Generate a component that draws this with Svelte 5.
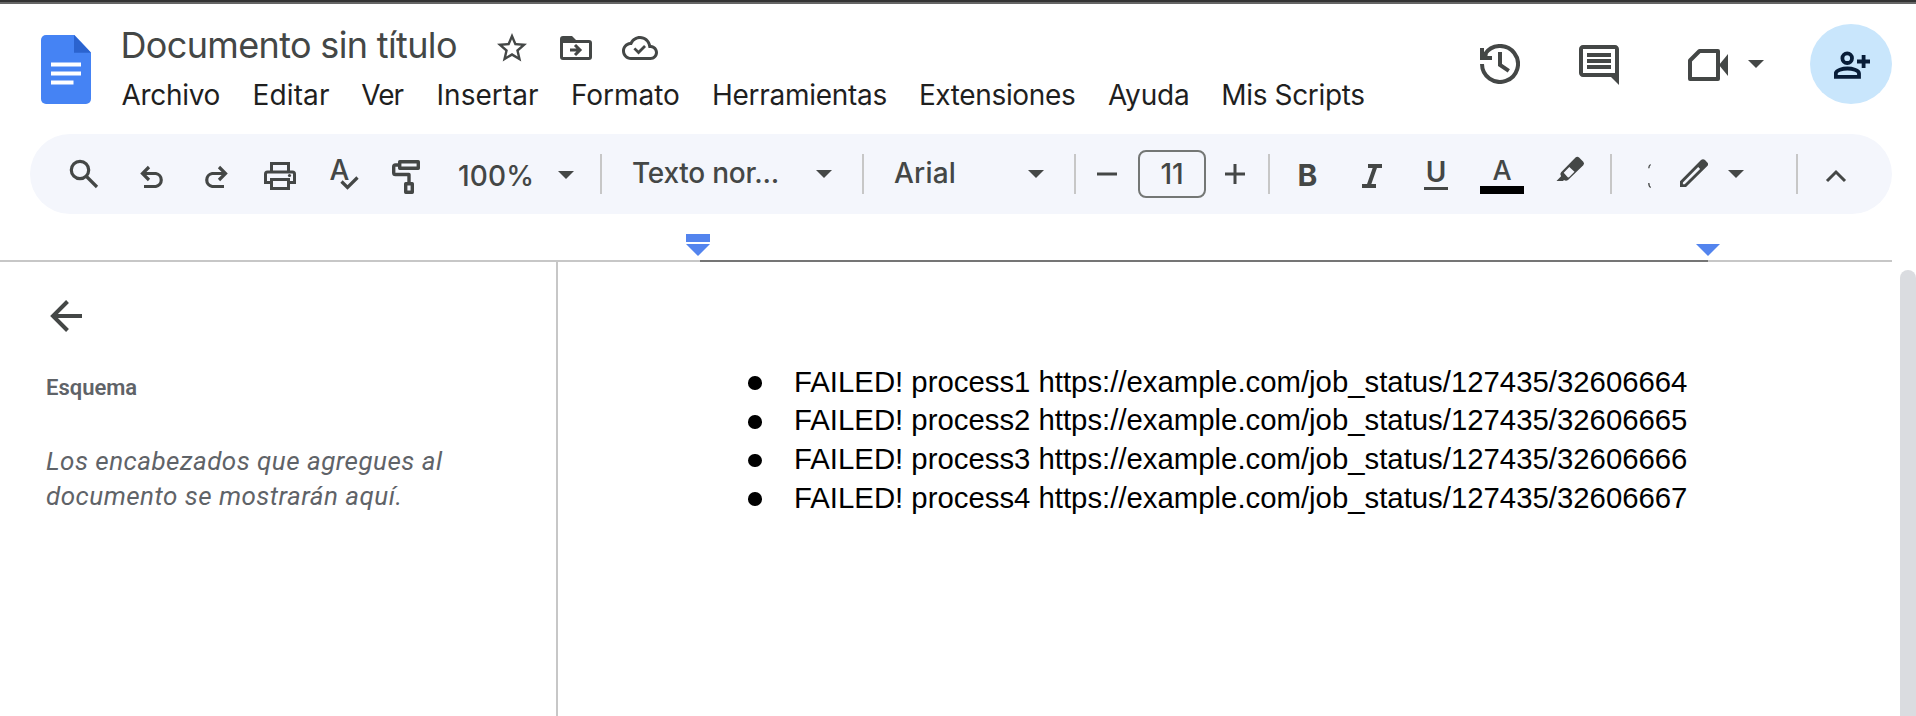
<script>
  const menus = [
    { label: 'Archivo', width: 131, spacing: -0.32 },
    { label: 'Editar', width: 108.8, spacing: 0.14 },
    { label: 'Ver', width: 75.2, spacing: -1 },
    { label: 'Insertar', width: 134.500, spacing: 0.04 },
    { label: 'Formato', width: 141, spacing: -0.05 },
    { label: 'Herramientas', width: 206.9, spacing: -0.28 },
    { label: 'Extensiones', width: 189, spacing: -0.36 },
    { label: 'Ayuda', width: 113.400, spacing: -0.2 },
    { label: 'Mis Scripts', width: 150, spacing: -0.35 }
  ];

  const items = [
    'FAILED! process1 https://example.com/job_status/127435/32606664',
    'FAILED! process2 https://example.com/job_status/127435/32606665',
    'FAILED! process3 https://example.com/job_status/127435/32606666',
    'FAILED! process4 https://example.com/job_status/127435/32606667'
  ];
</script>

{#snippet caret()}
  <svg class="caret" width="16" height="8" viewBox="0 0 16 8"><path d="M0 0h16L8 8z" /></svg>
{/snippet}

<div class="app">
  <div class="frame-edge"></div>

  <header>
    <svg class="logo" width="50" height="69" viewBox="0 0 50 69">
      <path fill="#4583f4" d="M5 0h28.500L50 17.500V64a5 5 0 0 1-5 5H5a5 5 0 0 1-5-5V5a5 5 0 0 1 5-5z" />
      <path fill="#2b63cf" d="M33 0l17 17.800H33z" />
      <path fill="#fff" d="M10 27.500h30v4H10zM10 36.500h30v4H10zM10 45.500h22.500v4H10z" />
    </svg>

    <div class="heading">
      <div class="title-row">
        <h1>Documento sin título</h1>
        <svg class="star" width="36" height="36" viewBox="0 0 24 24"><path d="M22 9.240l-7.190-.62L12 2 9.190 8.630 2 9.240l5.460 4.730L5.820 21 12 17.270 18.180 21l-1.630-7.030L22 9.240zM12 15.400l-3.760 2.270 1-4.280-3.320-2.880 4.380-.38L12 6.100l1.710 4.040 4.380.38-3.320 2.880 1 4.280L12 15.400z" /></svg>
        <svg class="folder" width="32" height="24" viewBox="0 0 32 24">
          <path fill-rule="evenodd" d="M3 0h9l4 4h13a3 3 0 0 1 3 3v14a3 3 0 0 1-3 3H3a3 3 0 0 1-3-3V3a3 3 0 0 1 3-3zM3 7v14h26V7z" />
          <path class="line" stroke-width="3" d="M10 14h10M15 9l5 5-5 5" />
        </svg>
        <svg class="cloud" width="36" height="36" viewBox="0 0 24 24"><path d="M19.350 10.040C18.670 6.590 15.640 4 12 4 9.110 4 6.600 5.640 5.350 8.040 2.340 8.360 0 10.910 0 14c0 3.310 2.690 6 6 6h13c2.760 0 5-2.240 5-5 0-2.640-2.050-4.780-4.650-4.960zM19 18H6c-2.210 0-4-1.790-4-4 0-2.050 1.530-3.760 3.560-3.970l1.070-.11.5-.95C8.080 7.140 9.940 6 12 6c2.620 0 4.880 1.860 5.390 4.430l.3 1.500 1.530.11c1.560.1 2.780 1.410 2.780 2.960 0 1.650-1.350 3-3 3z" /><path d="M11 13.700l-2.100-2.100-1.300 1.300L11 16.300l5-5-1.300-1.300z" /></svg>
      </div>
      <nav>
        {#each menus as menu}
          <span style="width: {menu.width}px; letter-spacing: {menu.spacing}px">{menu.label}</span>
        {/each}
      </nav>
    </div>

    <div class="actions">
      <svg width="40" height="40" viewBox="0 0 40 40">
        <path class="line" stroke-width="4" d="M2 20A18 18 0 1 0 5 10L2.500 13" />
        <path d="M0 4h4v6l2-2 2 3-1 1h5v4H0z" />
        <path class="line" stroke-width="4" d="M20 8v13l8.800 5.800" />
      </svg>
      <svg class="comment" width="48" height="48" viewBox="0 0 24 24"><path d="M21.990 4c0-1.100-.89-2-1.990-2H4c-1.100 0-2 .9-2 2v12c0 1.100.9 2 2 2h14l4 4-.01-18zM20 4v12H4V4h16zM6 12h12v2H6v-2zm0-3h12v2H6V9zm0-3h12v2H6V6z" /></svg>
      <svg class="video" width="40" height="32" viewBox="0 0 40 32">
        <path class="line" stroke-width="4" stroke-linejoin="round" d="M11.500 2H30v28H2V11.500z" />
        <path d="M31 16l9-11v22z" />
      </svg>
      {@render caret()}
      <div class="share">
        <svg width="36" height="28" viewBox="1834 51 36 28">
          <circle class="line" cx="1847.200" cy="58.200" r="4.800" stroke-width="3.800" />
          <path class="line" stroke-width="3.800" d="M1835.800 76.800v-3.300c0-3.400 7-5 11.600-5s11.600 1.600 11.600 5v3.300z" />
          <path class="line" stroke-width="3.800" d="M1857 61.500h13M1863.600 55v13" />
        </svg>
      </div>
    </div>
  </header>

  <div class="toolbar">
    <svg width="64" height="80" viewBox="56 134 64 80"><g class="line" stroke-width="3.200"><circle cx="80" cy="170" r="8.700" /><path d="M86 176l11 11" /></g></svg>
    <svg width="64" height="80" viewBox="120 134 64 80"><path class="line" stroke-width="3.200" d="M149 167l-6.500 6.500 6.500 6.500M142.500 173.500h13.300a6.600 6.600 0 0 1 0 13H144" /></svg>
    <svg width="64" height="80" viewBox="184 134 64 80"><path class="line" stroke-width="3.200" d="M219 167l6.500 6.500-6.500 6.500M225.500 173.500h-13.300a6.600 6.600 0 0 0 0 13H224" /></svg>
    <svg width="64" height="80" viewBox="248 134 64 80">
      <g class="line" stroke-width="3">
        <path d="M271.500 172v-8.500h17v8.500M271.500 182.500h-6V174a2 2 0 0 1 2-2h25a2 2 0 0 1 2 2v8.500h-6" />
        <path d="M271.500 179.500h17v9h-17z" />
      </g>
      <circle cx="289.500" cy="175.500" r="1.600" />
    </svg>
    <div class="spell">
      <span>A</span>
      <svg width="64" height="80" viewBox="312 134 64 80"><path class="line" stroke-width="3.200" d="M341.500 181.500l6 6 10-10" /></svg>
    </div>
    <svg width="64" height="80" viewBox="376 134 64 80">
      <g class="line" stroke-width="3.400" stroke-linejoin="round">
        <path d="M399.700 161.700h18.600v6.600h-18.600z" />
        <path d="M399 165h-3.500a1.800 1.800 0 0 0-1.800 1.800v5.900a1.800 1.800 0 0 0 1.800 1.800H409v8" />
        <path d="M405.700 183.700h6.600v8.600h-6.600z" />
      </g>
    </svg>

    <div class="select zoom"><span>100%</span>{@render caret()}</div>
    <i class="sep"></i>
    <div class="select style"><span>Texto nor...</span>{@render caret()}</div>
    <i class="sep"></i>
    <div class="select font"><span>Arial</span>{@render caret()}</div>
    <i class="sep"></i>

    <svg width="62" height="80" viewBox="1076 134 62 80"><path class="line" stroke-width="3" d="M1097 174h20" /></svg>
    <div class="size">11</div>
    <svg width="62" height="80" viewBox="1206 134 62 80"><path class="line" stroke-width="3" d="M1225 174h20M1235 164v20" /></svg>
    <i class="sep"></i>

    <div class="glyph bold">B</div>
    <svg width="64" height="80" viewBox="1340 134 64 80"><path class="line" stroke-width="4" d="M1368 166h14M1362 186h14M1375.500 166l-7 20" /></svg>
    <div class="glyph under"><span>U</span><i></i></div>
    <div class="glyph color"><span>A</span><i></i></div>
    <svg width="74" height="80" viewBox="1536 134 74 80"><path fill-rule="evenodd" d="M1575.500 157.600q1.800-1.600 3.600 0l4.200 4.200q1.500 1.700 0 3.400L1568 180q-2 1.600-4 0l-1 1h-6.500l4.600-4.800q-1.800-2 0-4zM1569.300 167l-5.600 5.800 4 4.400q.8.500 1.600-.2l5.200-5.200z" /></svg>
    <i class="sep"></i>
    <svg width="48" height="80" viewBox="1612 134 48 80"><path class="line" stroke-width="1.300" d="M1650.600 164.500q-1.800 1-1.800 3.800M1648.800 183q0 3.500 2 4.500" /></svg>
    <div class="mode">
      <svg width="48" height="80" viewBox="1660 134 48 80"><path fill-rule="evenodd" d="M1680 187v-5.700l21-21.200q2-1.800 4 0l2.300 2.300q1.600 1.800 0 3.700L1686 187zM1682.900 184.300h1.800l15.400-15.300-1.900-1.900-15.300 15.400z" /></svg>
      {@render caret()}
    </div>
    <i class="sep"></i>
    <svg width="94" height="80" viewBox="1798 134 94 80"><path class="line" stroke-width="3" d="M1827 181l9-9 9 9" /></svg>
  </div>

  <div class="ruler">
    <div class="indents">
      <svg width="24" height="22" viewBox="0 0 24 22"><path d="M0 0h24v8H0zM0 10h24L12 22z" /></svg>
      <svg width="24" height="12" viewBox="0 0 24 12"><path d="M0 0h24L12 12z" /></svg>
    </div>
    <div class="track"><i class="margin-left"></i><i class="text-area"></i><i class="margin-right"></i></div>
  </div>

  <div class="workspace">
    <aside>
      <svg width="32" height="32" viewBox="0 0 32 32"><path class="line" stroke-width="4" d="M32 16H3M17.500 1.500L3 16l14.500 14.500" /></svg>
      <h2>Esquema</h2>
      <p>Los encabezados que agregues al<br />documento se mostrarán aquí.</p>
    </aside>
    <main>
      <ul>
        {#each items as item}
          <li><i class="bullet"></i><span>{item}</span></li>
        {/each}
      </ul>
    </main>
    <div class="scrollbar"></div>
  </div>
</div>

<style>
  :global(body) {
    background: #fff;
    overflow: hidden;
  }

  .app {
    display: flex;
    flex-direction: column;
    width: 1916px;
    height: 716px;
    overflow: hidden;
    font-family: Inter, sans-serif;
    font-size: 28px;
    color: #444746;
    background: #fff;
  }

  svg {
    display: block;
    flex: none;
    fill: #444746;
  }

  .line {
    fill: none;
    stroke: #444746;
  }

  .frame-edge {
    height: 2px;
    flex: none;
    background: #333;
    border-bottom: 2px solid #666;
  }

  header {
    display: flex;
    align-items: flex-start;
    height: 130px;
    flex: none;
    padding-left: 41px;
  }

  .logo {
    margin-top: 31px;
  }

  .heading {
    margin: 19px 0 0 29.500px;
    width: 1289px;
  }

  .title-row {
    display: flex;
    height: 44px;
  }

  h1 {
    margin: 0;
    width: 373.500px;
    font-size: 36px;
    font-weight: 400;
    line-height: 44px;
    letter-spacing: -0.650px;
    white-space: nowrap;
  }

  .star {
    margin-top: 6.500px;
  }

  .folder {
    margin: 13px 30px 0;
  }

  .cloud {
    margin-top: 7px;
  }

  nav {
    display: flex;
    margin: 8px 0 0 1px;
    color: #1f1f1f;
    line-height: 40px;
    white-space: nowrap;
  }

  nav span {
    flex: none;
  }

  .actions {
    display: flex;
    align-items: center;
    height: 80px;
    margin: 20px 0 0 70.500px;
  }

  .comment {
    margin: 2px 0 0 55px;
  }

  .video {
    margin: 2px 20px 0 65px;
  }

  .share {
    display: flex;
    align-items: center;
    justify-content: center;
    width: 82px;
    height: 80px;
    margin-left: 46px;
    border-radius: 50%;
    background: #c9e6fc;
  }

  .share svg {
    margin: 2px 0 0 2px;
  }

  .share .line {
    stroke: #081d38;
  }

  .toolbar {
    display: flex;
    align-items: center;
    flex: none;
    width: 1836px;
    height: 80px;
    margin-left: 30px;
    padding-left: 26px;
    border-radius: 40px;
    background: #f4f6fc;
    font-weight: 450;
    line-height: 40px;
  }

  .sep {
    flex: none;
    width: 2px;
    height: 40px;
    background: #c7c7c7;
  }

  .select {
    display: flex;
    align-items: center;
    justify-content: space-between;
    box-sizing: border-box;
    flex: none;
    white-space: nowrap;
  }

  .zoom {
    width: 160px;
    padding: 2px 26px 0 18px;
    letter-spacing: 0.200px;
  }

  .zoom span {
    padding-top: 2px;
  }

  .style {
    width: 260px;
    padding: 0 30px 0 30px;
    letter-spacing: -0.250px;
  }

  .font {
    width: 210px;
    padding: 0 30px 0 30px;
    letter-spacing: 0.200px;
  }

  .style span,
  .font span {
    padding-bottom: 2px;
  }

  .size {
    box-sizing: border-box;
    flex: none;
    width: 68px;
    height: 48px;
    border: 2px solid #747775;
    border-radius: 8px;
    line-height: 44px;
    text-align: center;
  }

  .spell {
    display: grid;
    flex: none;
    width: 64px;
    height: 80px;
  }

  .spell span,
  .spell svg {
    grid-area: 1 / 1;
  }

  .spell span {
    padding: 16px 0 0 17.500px;
    font-size: 28px;
    font-weight: 500;
  }

  .glyph {
    display: flex;
    flex-direction: column;
    align-items: center;
    flex: none;
    height: 80px;
  }

  .glyph span {
    line-height: 30px;
  }

  .bold {
    box-sizing: border-box;
    width: 70px;
    padding-left: 5px;
    font-size: 30px;
    font-weight: 700;
    line-height: 82px;
  }

  .under {
    width: 64px;
    font-weight: 600;
  }

  .under span {
    margin-top: 23px;
  }

  .under i {
    width: 24px;
    height: 3px;
    background: #444746;
  }

  .color {
    width: 68px;
    font-weight: 500;
  }

  .color span {
    margin-top: 22px;
    font-size: 27px;
    line-height: 30px;
  }

  .color i {
    width: 44px;
    height: 8px;
    background: #000;
  }

  .mode {
    display: flex;
    align-items: center;
    flex: none;
    width: 136px;
    gap: 20px;
  }

  .ruler {
    display: flex;
    flex-direction: column;
    justify-content: space-between;
    flex: none;
    height: 48px;
  }

  .indents {
    display: flex;
    justify-content: space-between;
    align-items: flex-end;
    width: 1034px;
    margin: 20px 0 0 686px;
  }

  .indents svg {
    fill: #5384ee;
  }

  .track {
    display: flex;
    height: 2px;
  }

  .margin-left {
    width: 700px;
    background: #c7c7c7;
  }

  .text-area {
    width: 1008px;
    background: #757575;
  }

  .margin-right {
    width: 184px;
    background: #c7c7c7;
  }

  .workspace {
    display: flex;
    flex: 1;
  }

  aside {
    box-sizing: border-box;
    flex: none;
    width: 558px;
    padding: 38px 0 0 46px;
    border-right: 2px solid #c7c7c7;
    font-family: Roboto, sans-serif;
    color: #5f6368;
  }

  aside svg {
    margin-left: 4px;
  }

  h2 {
    margin: 41px 0 0;
    font-size: 22px;
    font-weight: 600;
    line-height: 30px;
    letter-spacing: 0;
  }

  p {
    margin: 41px 0 0;
    font-size: 26px;
    font-style: italic;
    line-height: 34.500px;
    letter-spacing: 0.480px;
  }

  main {
    flex: 1;
    padding: 100.800px 0 0 190px;
  }

  ul {
    margin: 0;
    padding: 0;
    list-style: none;
    font: 29.333px/38.667px "Liberation Sans", Arial, sans-serif;
    color: #000;
  }

  li {
    display: flex;
    align-items: center;
    white-space: nowrap;
  }

  .bullet {
    width: 13.500px;
    height: 13.500px;
    margin: 2px 32.500px 0 0;
    border-radius: 50%;
    background: #000;
  }

  .scrollbar {
    flex: none;
    width: 16px;
    margin-top: 8px;
    border-radius: 8px 8px 0 0;
    background: #dadce0;
  }
</style>
